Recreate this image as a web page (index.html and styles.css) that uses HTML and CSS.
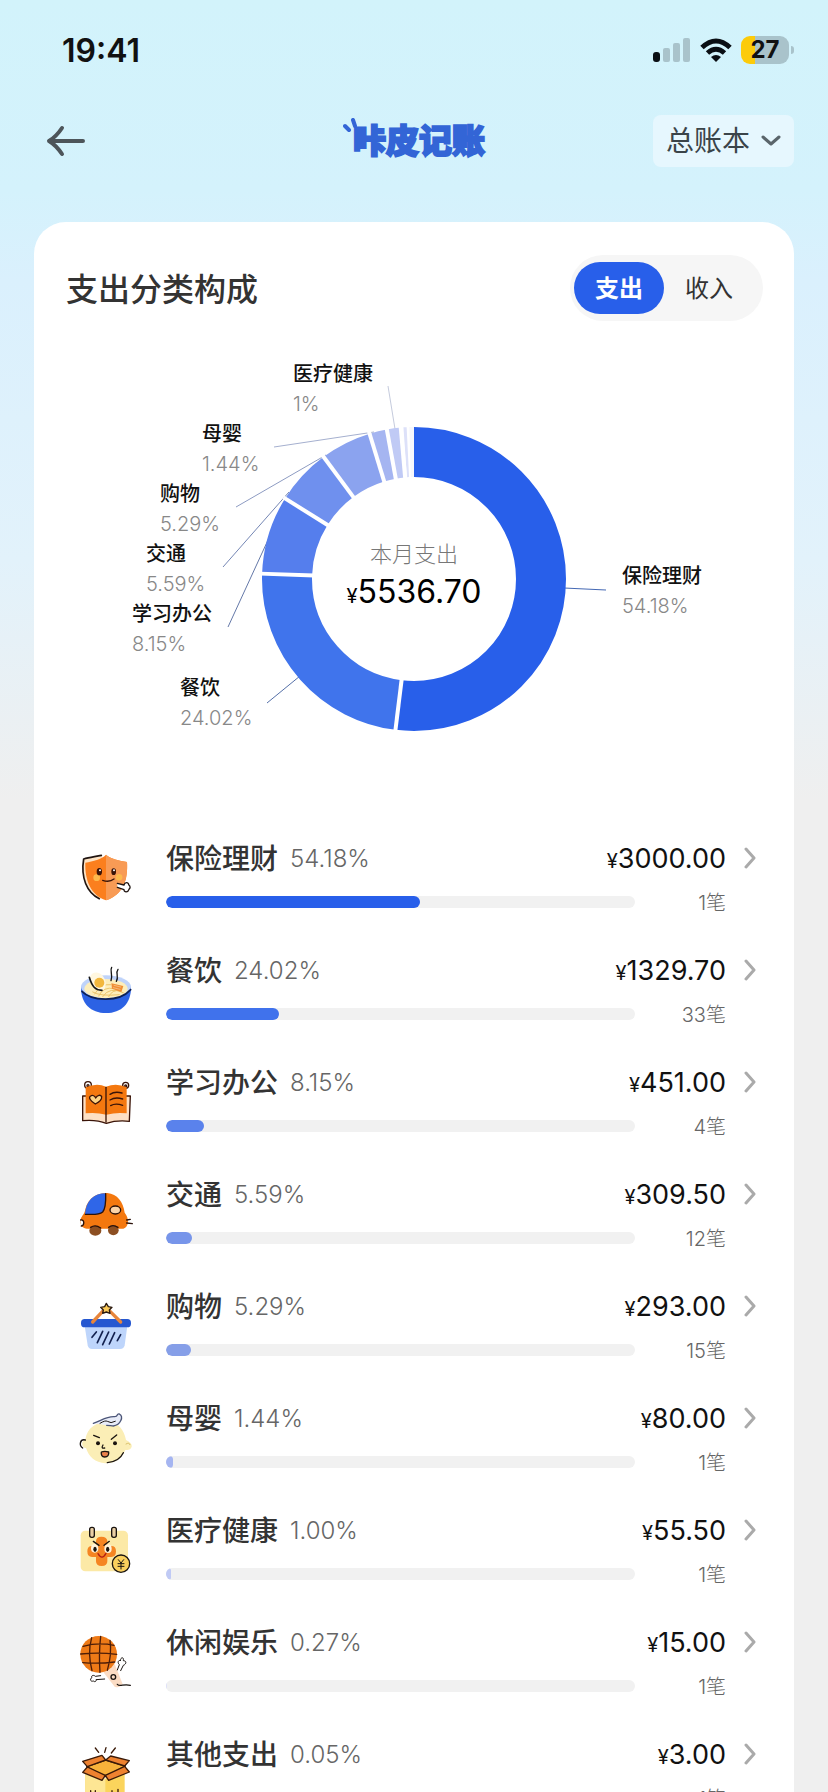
FILE: index.html
```html
<!DOCTYPE html>
<html lang="zh-CN">
<head>
  <meta charset="UTF-8">
  <meta name="viewport" content="width=device-width, initial-scale=1.0">
  <title>咔皮记账</title>
  <link rel="stylesheet" href="styles.css">
</head>
<body>
  <div class="screen">
    <div class="status-bar">
      <span class="time">19:41</span>
      <div class="status-icons">
        <svg width="38" height="24" viewBox="0 0 38 24">
          <rect x="0" y="14" width="7" height="10" rx="3" fill="#0a0f14"/>
          <rect x="10" y="10" width="7" height="14" rx="2" fill="#a9c3cb"/>
          <rect x="20" y="5" width="7" height="19" rx="2" fill="#a9c3cb"/>
          <rect x="30" y="0" width="7" height="24" rx="2" fill="#a9c3cb"/>
        </svg>
        <svg width="32" height="24" viewBox="0 0 32 24" fill="none" stroke="#0a0f14" stroke-width="5">
          <path d="M2 9.500Q16 -3.500 30 9.500"/>
          <path d="M7.500 15Q16 7.500 24.500 15"/>
          <path d="M16 24L11 19Q16 15 21 19Z" fill="#0a0f14" stroke="none"/>
        </svg>
        <div class="battery"><span>27</span></div>
      </div>
    </div>

    <header class="header">
      <button class="back" aria-label="返回">
        <svg width="40" height="32" viewBox="0 0 40 32" fill="none" stroke="#4d555a" stroke-width="4" stroke-linecap="round" stroke-linejoin="round">
          <path d="M37 16H3M16 3C12 9 8 13 3 16C8 19 12 23 16 29"/>
        </svg>
      </button>
      <h1 class="logo">
        <svg width="16" height="16" viewBox="0 0 16 16" fill="none" stroke="#3365d6" stroke-width="4" stroke-linecap="round">
          <path d="M10 2L12 8M2 8L6 12"/>
        </svg>
        <span>咔皮记账</span>
      </h1>
      <label class="book">
        <select aria-label="账本">
          <option>总账本</option>
        </select>
        <svg width="20" height="12" viewBox="0 0 20 12" fill="none" stroke="#5a656b" stroke-width="3" stroke-linecap="round" stroke-linejoin="round">
          <path d="M2 2L10 9L18 2"/>
        </svg>
      </label>
    </header>

    <main class="card">
      <div class="card-head">
        <h2>支出分类构成</h2>
        <div class="toggle">
          <button class="active">支出</button>
          <button>收入</button>
        </div>
      </div>

      <svg class="chart" viewBox="0 0 760 517">
        <g class="lines">
          <path d="M354 65L361 108" stroke="#c5cbdd"/>
          <path d="M240 126L340 111" stroke="#a5b0cf"/>
          <path d="M202 186L292 134" stroke="#8d9bc2"/>
          <path d="M189 246L255 171" stroke="#7486b4"/>
          <path d="M194 306L234 219" stroke="#6478a8"/>
          <path d="M233 382L266 355" stroke="#5570a8"/>
          <path d="M530 267L572 269" stroke="#4468b4"/>
        </g>
        <g transform="translate(380 258) rotate(-90)" fill="none" stroke-width="50">
          <circle r="127" pathLength="360" stroke="#285fea" stroke-dasharray="187 360"/>
          <circle r="127" pathLength="360" stroke="#4074ec" stroke-dasharray="85 360" stroke-dashoffset="-187"/>
          <circle r="127" pathLength="360" stroke="#557eed" stroke-dasharray="30 360" stroke-dashoffset="-272"/>
          <circle r="127" pathLength="360" stroke="#6f90ee" stroke-dasharray="21.500 360" stroke-dashoffset="-302"/>
          <circle r="127" pathLength="360" stroke="#8ba3ef" stroke-dasharray="19.500 360" stroke-dashoffset="-323.500"/>
          <circle r="127" pathLength="360" stroke="#a5b5f1" stroke-dasharray="6.700 360" stroke-dashoffset="-343"/>
          <circle r="127" pathLength="360" stroke="#c0caf5" stroke-dasharray="5.300 360" stroke-dashoffset="-349.700"/>
          <circle r="127" pathLength="360" stroke="#dde1f9" stroke-dasharray="1.200 360" stroke-dashoffset="-356"/>
          <circle r="127" pathLength="360" stroke="#f6f7fc" stroke-dasharray="1.800 360" stroke-dashoffset="-358.200"/>
        </g>
        <g transform="translate(380 258)" stroke="#fff" stroke-width="4">
          <path d="M0 -154V-100" transform="rotate(187)"/>
          <path d="M0 -154V-100" transform="rotate(272)"/>
          <path d="M0 -154V-100" transform="rotate(302)"/>
          <path d="M0 -154V-100" transform="rotate(323.500)"/>
          <path d="M0 -154V-100" transform="rotate(343)"/>
          <path d="M0 -154V-100" transform="rotate(349.700)"/>
          <path d="M0 -154V-100" transform="rotate(355)"/>
        </g>
        <text class="total-label" x="380" y="241">本月支出</text>
        <text class="total" x="380" y="282"><tspan class="yen">¥</tspan>5536.70</text>

        <text class="name" x="259" y="60">医疗健康</text>
        <text class="pct" x="259" y="90">1%</text>
        <text class="name" x="168" y="120">母婴</text>
        <text class="pct" x="168" y="150">1.44%</text>
        <text class="name" x="126" y="180">购物</text>
        <text class="pct" x="126" y="210">5.29%</text>
        <text class="name" x="112" y="240">交通</text>
        <text class="pct" x="112" y="270">5.59%</text>
        <text class="name" x="98" y="300">学习办公</text>
        <text class="pct" x="98" y="330">8.15%</text>
        <text class="name" x="146" y="374">餐饮</text>
        <text class="pct" x="146" y="404">24.02%</text>
        <text class="name" x="588" y="262">保险理财</text>
        <text class="pct" x="588" y="292">54.18%</text>
      </svg>

      <div class="list">
        <a class="row" href="#">
          <!-- shield -->
          <svg class="icon" viewBox="24 24 168 168" fill="none" stroke-linecap="round" stroke-linejoin="round">
            <path d="M96 48C78 50 58 52 42 58C34 112 50 156 90 178L112 120Z" fill="#fde3c4"/>
            <path d="M108 44C122 56 148 62 171 66C174 116 162 164 108 181C62 166 44 118 46 68C70 64 94 58 108 44Z" fill="#fb7f1e"/>
            <path d="M108 44C122 56 148 62 171 66C174 116 162 164 108 181Z" fill="#f89b55"/>
            <path d="M94 46C76 50 58 52 41 57C32 112 50 158 88 176" stroke="#1f1410" stroke-width="5"/>
            <circle cx="80" cy="113" r="10" fill="#fdb94c"/>
            <circle cx="147" cy="112" r="10" fill="#fdb94c"/>
            <ellipse cx="88" cy="95" rx="8" ry="11" fill="#3a1408"/>
            <ellipse cx="131" cy="95" rx="7" ry="10" fill="#3a1408"/>
            <circle cx="90" cy="91" r="3" fill="#fff"/>
            <circle cx="132" cy="91" r="3" fill="#fff"/>
            <path d="M98 121Q118 128 132 117" stroke="#3a1408" stroke-width="4"/>
            <path d="M142 130L162 135C164 126 176 126 176 134C183 140 180 145 177 148C174 158 162 158 162 149L142 142" fill="#fff" stroke="#1f1410" stroke-width="4"/>
          </svg>
          <div class="info">
            <div class="line"><span class="label">保险理财</span><span class="percent">54.18%</span><span class="amount"><small>¥</small>3000.00</span></div>
            <div class="line second"><div class="bar"><div class="fill c1" style="width: 54.18%"></div></div><span class="count">1笔</span></div>
          </div>
          <svg class="chevron" viewBox="0 0 12 40"><path d="M2 11L10 20L2 29"/></svg>
        </a>

        <a class="row" href="#">
          <!-- noodle bowl -->
          <svg class="icon" viewBox="24 360 168 168" fill="none" stroke-linecap="round" stroke-linejoin="round">
            <path d="M33 440C32 490 62 519 108 519C154 519 184 490 183 440Z" fill="#2c62e4"/>
            <ellipse cx="108" cy="441" rx="75" ry="35" fill="#bfd3fa"/>
            <ellipse cx="108" cy="446" rx="65" ry="29" fill="#fdeebb"/>
            <path d="M74 462Q92 430 122 434M86 468Q100 438 132 446M98 470Q118 438 160 458M68 456Q90 470 148 464M116 470Q126 448 150 452" stroke="#ecc56b" stroke-width="3"/>
            <path d="M60 412C64 394 88 392 100 410C114 428 106 456 90 452C72 450 60 430 60 412Z" fill="#fff7e0"/>
            <circle cx="88" cy="428" r="15" fill="#f2b73d"/>
            <path d="M124 430L160 438L154 456L126 446Z" fill="#f08d35"/>
            <path d="M132 436L152 441M130 443L150 448" stroke="#fbd29a" stroke-width="2"/>
            <path d="M58 412C66 440 76 450 96 451" stroke="#161616" stroke-width="5"/>
            <path d="M125 382C118 392 130 404 123 422M144 388C135 400 148 408 139 424" stroke="#161616" stroke-width="4"/>
            <path d="M36 454C62 482 146 490 182 449" stroke="#0e2155" stroke-width="5"/>
          </svg>
          <div class="info">
            <div class="line"><span class="label">餐饮</span><span class="percent">24.02%</span><span class="amount"><small>¥</small>1329.70</span></div>
            <div class="line second"><div class="bar"><div class="fill c2" style="width: 24.02%"></div></div><span class="count">33笔</span></div>
          </div>
          <svg class="chevron" viewBox="0 0 12 40"><path d="M2 11L10 20L2 29"/></svg>
        </a>

        <a class="row" href="#">
          <!-- book -->
          <svg class="icon" viewBox="24 36 168 168" fill="none" stroke="#3a1408" stroke-width="4" stroke-linecap="round" stroke-linejoin="round">
            <circle cx="54" cy="75" r="10" fill="#fff"/>
            <circle cx="167" cy="76" r="9" fill="#fff"/>
            <circle cx="54" cy="77" r="3"/>
            <circle cx="167" cy="78" r="3"/>
            <path d="M38 108V182Q78 178 109 190Q140 180 178 184L181 108Z" fill="#fde0c4"/>
            <path d="M47 82Q80 68 108 80Q140 68 170 82V160Q140 156 109 164Q78 156 47 160Z" fill="#f4780f" stroke="none"/>
            <path d="M108 82V186"/>
            <path d="M76 132C62 124 54 112 62 108C68 104 75 108 77 114C82 104 92 104 95 110C96 119 86 127 76 132Z" fill="#fdd385"/>
            <path d="M120 103Q134 93 156 99M120 120Q136 110 158 117M122 137Q136 128 158 136"/>
          </svg>
          <div class="info">
            <div class="line"><span class="label">学习办公</span><span class="percent">8.15%</span><span class="amount"><small>¥</small>451.00</span></div>
            <div class="line second"><div class="bar"><div class="fill c3" style="width: 8.15%"></div></div><span class="count">4笔</span></div>
          </div>
          <svg class="chevron" viewBox="0 0 12 40"><path d="M2 11L10 20L2 29"/></svg>
        </a>

        <a class="row" href="#">
          <!-- car -->
          <svg class="icon" viewBox="24 372 168 168" fill="none" stroke="#2b120a" stroke-width="4" stroke-linecap="round" stroke-linejoin="round">
            <path d="M32 478C36 466 44 462 46 448C54 412 84 398 112 399C142 402 160 426 164 458C178 474 178 500 160 506H50C34 504 30 494 32 478Z" fill="#f4780f" stroke="none"/>
            <path d="M45 462C48 422 72 400 107 400C106 426 106 444 98 456C88 466 66 464 45 462Z" fill="#2f66e8" stroke="none"/>
            <path d="M107 401C108 430 106 446 98 456C86 466 66 463 46 463"/>
            <ellipse cx="136" cy="450" rx="16" ry="12" fill="#fbd3a8"/>
            <path d="M32 480C44 478 44 496 34 498" fill="#fff"/>
            <ellipse cx="76" cy="512" rx="18" ry="15" fill="#8c4f22" stroke="none"/>
            <ellipse cx="130" cy="511" rx="16" ry="15" fill="#8c4f22" stroke="none"/>
            <path d="M62 502Q76 492 92 504M116 502Q128 492 144 502"/>
            <path d="M170 480L181 478M170 489L187 491"/>
          </svg>
          <div class="info">
            <div class="line"><span class="label">交通</span><span class="percent">5.59%</span><span class="amount"><small>¥</small>309.50</span></div>
            <div class="line second"><div class="bar"><div class="fill c4" style="width: 5.59%"></div></div><span class="count">12笔</span></div>
          </div>
          <svg class="chevron" viewBox="0 0 12 40"><path d="M2 11L10 20L2 29"/></svg>
        </a>

        <a class="row" href="#">
          <!-- basket -->
          <svg class="icon" viewBox="24 18 168 168" fill="none" stroke-linecap="round" stroke-linejoin="round">
            <path d="M44 108H172L164 166Q162 177 150 177H66Q55 177 53 166Z" fill="#bed5fb"/>
            <rect x="33" y="87" width="150" height="25" rx="11" fill="#2557d0"/>
            <path d="M100 62L68 96M118 62L152 96" stroke="#e8853a" stroke-width="10"/>
            <path d="M109 40L115 50L126 52L118 60L120 70L109 66L98 70L100 60L92 52L104 50Z" fill="#fccb58" stroke="#2b1a10" stroke-width="4"/>
            <path d="M79 126L66 142M98 124L82 158M116 126L98 164M134 128L118 162M152 134L142 152" stroke="#13214f" stroke-width="5"/>
          </svg>
          <div class="info">
            <div class="line"><span class="label">购物</span><span class="percent">5.29%</span><span class="amount"><small>¥</small>293.00</span></div>
            <div class="line second"><div class="bar"><div class="fill c5" style="width: 5.29%"></div></div><span class="count">15笔</span></div>
          </div>
          <svg class="chevron" viewBox="0 0 12 40"><path d="M2 11L10 20L2 29"/></svg>
        </a>

        <a class="row" href="#">
          <!-- baby -->
          <svg class="icon" viewBox="24 354 168 168" fill="none" stroke="#1a1410" stroke-width="4" stroke-linecap="round" stroke-linejoin="round">
            <path d="M46 448C52 412 80 396 112 396C146 396 162 420 168 450C196 462 186 482 166 480C156 506 134 520 106 520C76 518 56 500 48 474C34 474 32 454 46 448Z" fill="#fbeeb6" stroke="none"/>
            <path d="M46 450C30 446 26 466 38 474"/>
            <path d="M160 488Q148 514 112 518"/>
            <path d="M70 400C94 392 110 378 134 380C146 380 138 370 148 372C162 380 152 404 130 408C124 408 118 406 110 406" fill="#e8ecf8" stroke="#4b5578"/>
            <path d="M90 400Q106 390 112 394Q122 402 136 394" stroke-width="3"/>
            <path d="M71 436L88 443M140 435L124 448"/>
            <circle cx="84" cy="460" r="6" fill="#1a1410" stroke="none"/>
            <circle cx="135" cy="460" r="6" fill="#1a1410" stroke="none"/>
            <path d="M99 465Q92 476 104 474"/>
            <path d="M94 486Q104 482 116 486Q118 500 104 501Q92 500 94 486Z" fill="#e9814b"/>
            <path d="M168 462Q178 456 180 464" stroke="#d9c06a" stroke-width="3"/>
          </svg>
          <div class="info">
            <div class="line"><span class="label">母婴</span><span class="percent">1.44%</span><span class="amount"><small>¥</small>80.00</span></div>
            <div class="line second"><div class="bar"><div class="fill c6" style="width: 1.44%"></div></div><span class="count">1笔</span></div>
          </div>
          <svg class="chevron" viewBox="0 0 12 40"><path d="M2 11L10 20L2 29"/></svg>
        </a>

        <a class="row" href="#">
          <!-- medical calendar -->
          <svg class="icon" viewBox="24 30 168 168" fill="none" stroke="#1a1410" stroke-width="4" stroke-linecap="round" stroke-linejoin="round">
            <rect x="32" y="62" width="142" height="122" rx="14" fill="#fce9a6" stroke="none"/>
            <rect x="59" y="52" width="14" height="30" rx="6" fill="#e9cfa5"/>
            <rect x="125" y="52" width="14" height="30" rx="6" fill="#e9cfa5"/>
            <path d="M78 94Q78 80 94 80Q112 80 112 94V108H124Q138 108 138 124Q138 141 124 141H112V154Q112 168 95 168Q78 168 78 154V141H66Q52 141 52 124Q52 108 66 108H78Z" fill="#f58522" stroke="none"/>
            <ellipse cx="74" cy="115" rx="11" ry="13" fill="#fff3da" stroke="none"/>
            <ellipse cx="114" cy="116" rx="11" ry="13" fill="#fff3da" stroke="none"/>
            <ellipse cx="75" cy="118" rx="5" ry="8" fill="#1a1410" stroke="none"/>
            <ellipse cx="113" cy="118" rx="5" ry="8" fill="#1a1410" stroke="none"/>
            <path d="M70 94L87 106M118 94L102 106"/>
            <path d="M84 131Q96 152 108 130" stroke="#b51d12"/>
            <circle cx="153" cy="161" r="26" fill="#fbd05d"/>
            <path d="M145 149L153 159L161 149M144 161H162M144 169H162M153 159V177" stroke-width="3"/>
          </svg>
          <div class="info">
            <div class="line"><span class="label">医疗健康</span><span class="percent">1.00%</span><span class="amount"><small>¥</small>55.50</span></div>
            <div class="line second"><div class="bar"><div class="fill c7" style="width: 1%"></div></div><span class="count">1笔</span></div>
          </div>
          <svg class="chevron" viewBox="0 0 12 40"><path d="M2 11L10 20L2 29"/></svg>
        </a>

        <a class="row" href="#">
          <!-- microphone -->
          <svg class="icon" viewBox="24 366 168 168" fill="none" stroke="#1a1410" stroke-width="3" stroke-linecap="round" stroke-linejoin="round">
            <path d="M98 484L134 462L157 520Q150 536 134 530Z" fill="#fbdcc4" stroke="none"/>
            <circle cx="86" cy="433" r="55" fill="#ee7a17" stroke="none"/>
            <path d="M65 383Q52 430 66 482M92 379Q86 430 90 487M120 391Q126 432 112 481M39 409Q86 396 132 406M32 432Q86 426 140 433M38 458Q86 462 134 456" stroke="#4d1d08" stroke-width="4"/>
            <circle cx="130" cy="501" r="7" stroke-width="4"/>
            <path d="M142 523C150 532 160 520 181 526" stroke-width="4"/>
            <path d="M142 480L148 464C140 456 148 448 151 453C152 440 162 440 160 452C170 452 170 462 160 466L152 482"/>
            <path d="M92 497L76 499C72 494 62 496 66 502C58 508 62 516 70 513C76 518 80 512 78 509L104 507"/>
          </svg>
          <div class="info">
            <div class="line"><span class="label">休闲娱乐</span><span class="percent">0.27%</span><span class="amount"><small>¥</small>15.00</span></div>
            <div class="line second"><div class="bar"><div class="fill c8" style="width: 0.27%"></div></div><span class="count">1笔</span></div>
          </div>
          <svg class="chevron" viewBox="0 0 12 40"><path d="M2 11L10 20L2 29"/></svg>
        </a>

        <a class="row" href="#">
          <!-- open box -->
          <svg class="icon" viewBox="24 702 168 168" fill="none" stroke="#3a1a08" stroke-width="4" stroke-linecap="round" stroke-linejoin="round">
            <path d="M46 780L106 806L164 780V846L106 866L46 846Z" fill="#fbd45c" stroke="none"/>
            <path d="M46 780L106 806V866L46 846Z" fill="#fde694" stroke="none"/>
            <path d="M50 770L107 750L166 768L106 800Z" fill="#f7b23a"/>
            <path d="M107 750L96 736L38 754L52 770Z" fill="#ee8230"/>
            <path d="M107 750L122 738L178 752L164 768Z" fill="#ee8230"/>
            <path d="M52 771L38 787L96 811L106 796Z" fill="#ee8230"/>
            <path d="M164 769L178 786L116 811L106 796Z" fill="#ee8230"/>
            <path d="M76 714L86 727M108 713L104 727M136 714L124 729M62 842V850M76 842V850M126 842V850M144 838V848"/>
          </svg>
          <div class="info">
            <div class="line"><span class="label">其他支出</span><span class="percent">0.05%</span><span class="amount"><small>¥</small>3.00</span></div>
            <div class="line second"><div class="bar"><div class="fill c8" style="width: 0.05%"></div></div><span class="count">1笔</span></div>
          </div>
          <svg class="chevron" viewBox="0 0 12 40"><path d="M2 11L10 20L2 29"/></svg>
        </a>
      </div>
    </main>
  </div>
</body>
</html>
```
FILE: styles.css
```css
* {
  box-sizing: border-box;
}
body {
  margin: 0;
  font-family: Inter, "Noto Sans CJK SC", sans-serif;
  color: #111;
}
button, select {
  font-family: inherit;
  border: none;
  background: none;
  padding: 0;
  cursor: pointer;
}
.screen {
  height: 100vh;
  overflow-y: auto;
  scrollbar-width: none;
  background: linear-gradient(#d2f3fb 0, #d4f2fc 190px, #daf0fd 280px, #e2f2fb 560px, #efefef 800px);
}
.status-bar {
  display: flex;
  justify-content: space-between;
  align-items: center;
  height: 100px;
  padding: 0 34px 0 62px;
}
.time {
  font-size: 32px;
  font-weight: 600;
}
.status-icons {
  display: flex;
  align-items: center;
  gap: 9px;
}
.battery {
  display: flex;
  align-items: center;
}
.battery span {
  width: 48px;
  height: 28px;
  line-height: 28px;
  border-radius: 9px;
  background: linear-gradient(90deg, #fccb0a 14px, #a9c3cb 14px);
  font-size: 24px;
  font-weight: 700;
  text-align: center;
}
.battery::after {
  content: "";
  width: 3px;
  height: 8px;
  margin-left: 2px;
  border-radius: 0 3px 3px 0;
  background: #a9c3cb;
}
.header {
  display: grid;
  grid-template-columns: 1fr auto 1fr;
  align-items: center;
  height: 82px;
  margin-bottom: 40px;
  padding: 0 34px;
}
.back {
  justify-self: start;
  height: 32px;
  margin-left: 12px;
}
.logo {
  display: flex;
  align-items: flex-start;
  margin: 0;
  font-size: 33px;
  line-height: 46px;
  font-weight: 900;
  color: #3365d6;
  -webkit-text-stroke: 2px #3365d6;
}
.logo svg {
  margin-right: -6px;
}
.book {
  justify-self: end;
  display: flex;
  align-items: center;
  height: 52px;
  padding: 0 13px;
  border-radius: 8px;
  background: #e6f7fe;
}
.book select {
  appearance: none;
  width: 95px;
  font-size: 28px;
  line-height: 40px;
  color: #3a4449;
}
.book svg {
  pointer-events: none;
}
.card {
  margin: 0 34px;
  padding-top: 33px;
  border-radius: 32px 32px 0 0;
  background: #fff;
}
.card-head {
  display: flex;
  justify-content: space-between;
  align-items: center;
  padding: 0 31px 0 32px;
}
.card-head h2 {
  margin: 0;
  padding-bottom: 2px;
  font-size: 32px;
  font-weight: 500;
  color: #333;
}
.toggle {
  display: flex;
  height: 66px;
  padding: 7px 9px 7px 4px;
  border-radius: 33px;
  background: #f6f6f6;
}
.toggle button {
  width: 90px;
  padding-bottom: 3px;
  border-radius: 26px;
  font-size: 24px;
  color: #333;
}
.toggle .active {
  background: #285fea;
  color: #fff;
  font-weight: 700;
}
.chart {
  display: block;
  width: 100%;
}
.chart .name {
  font-size: 20px;
  font-weight: 500;
  fill: #111;
}
.chart .pct {
  font-size: 20px;
  font-weight: 300;
  fill: #888;
}
.chart .total-label {
  font-size: 22px;
  font-weight: 300;
  text-anchor: middle;
  fill: #777;
}
.chart .total {
  font-size: 32px;
  font-weight: 400;
  text-anchor: middle;
}
.chart .yen {
  font-size: 20px;
}
.list {
  display: flex;
  flex-direction: column;
  gap: 36px;
  padding: 0 38px 36px 44px;
}
.row {
  display: flex;
  align-items: center;
  color: inherit;
  text-decoration: none;
}
.icon {
  flex: none;
  width: 56px;
  height: 56px;
}
.info {
  flex: 1;
  margin: 0 18px 0 32px;
}
.line {
  display: flex;
  align-items: center;
  height: 40px;
}
.line.second {
  height: 24px;
  margin-top: 12px;
}
.label {
  padding-bottom: 2px;
  font-size: 28px;
  font-weight: 500;
  color: #333;
}
.percent {
  margin-left: 12px;
  font-size: 24px;
  font-weight: 300;
  color: #666;
}
.amount {
  margin-left: auto;
  font-size: 27px;
  font-weight: 400;
}
.amount small {
  font-size: 20px;
}
.bar {
  flex: 1;
  height: 12px;
  border-radius: 6px;
  background: #f1f1f1;
  overflow: hidden;
}
.fill {
  height: 12px;
  border-radius: 6px;
}
.c1 { background: #285fea; }
.c2 { background: #4072ec; }
.c3 { background: #5a82ec; }
.c4 { background: #7795ea; }
.c5 { background: #869fe8; }
.c6 { background: #a5b5f1; }
.c7 { background: #c0caf5; }
.c8 { background: #dde1f9; }
.count {
  width: 91px;
  padding-bottom: 2px;
  font-size: 20px;
  font-weight: 300;
  text-align: right;
  color: #666;
}
.chevron {
  align-self: flex-start;
  width: 12px;
  height: 40px;
  fill: none;
  stroke: #aaa;
  stroke-width: 3;
  stroke-linecap: round;
  stroke-linejoin: round;
}
```
